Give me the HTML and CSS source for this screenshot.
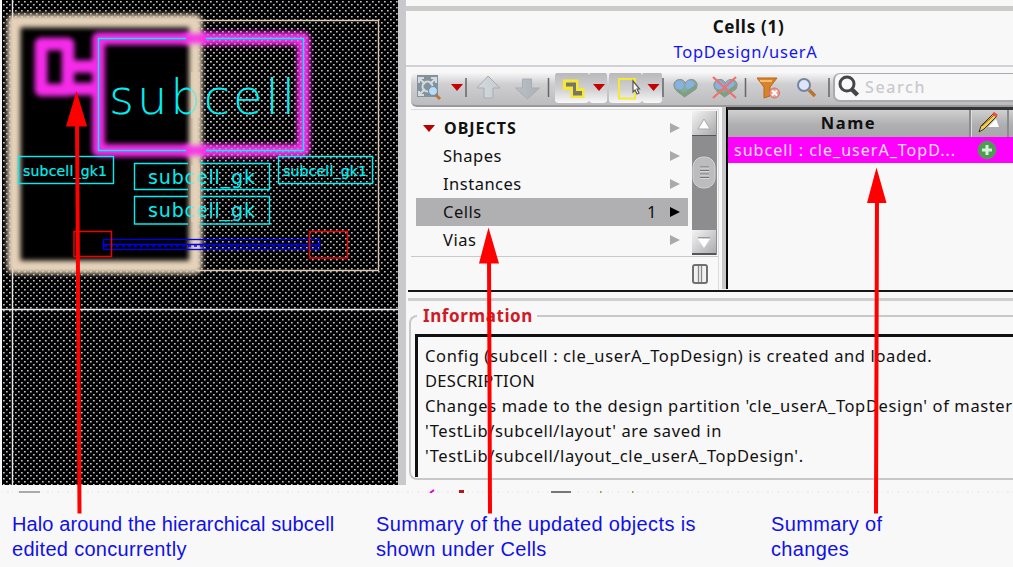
FILE: index.html
```html
<!DOCTYPE html>
<html lang="en">
<head>
<meta charset="utf-8">
<title>Cells (1) - TopDesign/userA</title>
<link rel="stylesheet" href="styles.css">
</head>
<body>
<div class="page">
  <main class="workspace">
    <section class="canvas">
      <svg class="layout" width="396" height="485" viewBox="2 0 396 485">
        <defs>
          <pattern id="dots" width="6" height="6" patternUnits="userSpaceOnUse">
            <rect x="0" y="1" width="1.7" height="1.5" fill="#c0c0c6"/>
            <rect x="3" y="4" width="1.7" height="1.5" fill="#c0c0c6"/>
          </pattern>
          <filter id="soft" x="-20%" y="-20%" width="140%" height="140%"><feGaussianBlur stdDeviation="2.4"/></filter>
        </defs>
        <rect x="2" width="396" height="485" fill="#000"/>
        <rect x="2" width="396" height="485" fill="url(#dots)"/>
        <path class="axis" d="M12.5 0V485M2 309.5H398"/>
        <path class="extent" d="M196 20.5H378.500V270.500H196"/>
        <rect x="12" y="20" width="185" height="248" fill="#000"/>
        <g class="magenta-halo" filter="url(#soft)">
          <rect x="41" y="44" width="27" height="46"/>
          <path d="M68 66.500H98M68 89H98"/>
          <rect x="98.500" y="38.500" width="205" height="112"/>
        </g>
        <rect x="202" y="28" width="110" height="132" fill="url(#dots)" opacity=".55"/>
        <rect class="tan-halo" x="14" y="21" width="181.500" height="246" filter="url(#soft)"/>
        <g class="magenta-cross" filter="url(#soft)"><path d="M184 38.500H208M184 150.500H208"/></g>
        <g class="cyan">
          <path d="M186 38.500H98.500V150.500H186M206 38.500H303.500V150.500H206"/>
          <rect x="18.500" y="156.500" width="95" height="27"/>
          <rect x="278.500" y="156.500" width="94" height="27"/>
          <path d="M188 163.500H134.500V189.500H188M200 163.500H269.500V189.500H200M188 196.500H134.500V224H188M200 196.500H269.500V224H200"/>
        </g>
        <text class="cell-name" x="109" y="114" textLength="186">subcell</text>
        <text class="gk1" x="23" y="176" textLength="84">subcell_gk1</text>
        <text class="gk1" x="283" y="176" textLength="84">subcell_gk1</text>
        <text class="gk" x="148" y="184" textLength="107">subcell_gk</text>
        <text class="gk" x="148" y="217" textLength="107">subcell_gk</text>
        <path class="veil" d="M195.500 72V118M195.500 165V222"/>
        <g class="blue">
          <rect x="103.500" y="239.500" width="216" height="10"/>
          <path d="M104 244.500H319"/>
          <path d="M104 246H319" stroke-dasharray="3 3"/>
        </g>
        <rect class="pin" x="74" y="231.500" width="37.500" height="25"/>
        <rect class="pin" x="309.500" y="231.500" width="38" height="26.500"/>
      </svg>
    </section>
    <section class="assistant">
      <header class="heading">
        <h1>Cells (1)</h1>
        <p>TopDesign/userA</p>
      </header>
      <div class="toolbar">
        <svg class="tools" width="425" height="34" viewBox="411 73 425 34">
          <defs>
            <linearGradient id="tab" x2="0" y2="1"><stop offset="0" stop-color="#b8b8bb"/><stop offset=".55" stop-color="#d0d0d2"/><stop offset="1" stop-color="#f8f8f8"/></linearGradient>
            <linearGradient id="arrow" x2="1"><stop stop-color="#d6dbdf"/><stop offset="1" stop-color="#a9b1b7"/></linearGradient>
          </defs>
          <path d="M555 100V76q0-4 5-4h25q3 0 4 3 1-3 4-3h10q4 0 4 4v24q0 3-4 3h-10q-3 0-4-2-1 2-4 2h-26q-4 0-4-3zM609 100V76q0-4 4-4h24q4 0 5 3 1-3 4-3h12q4 0 4 4v24q0 3-4 3h-12q-3 0-4-2-1 2-4 2h-25q-4 0-4-3z" fill="url(#tab)"/>
          <rect x="417" y="75" width="21" height="22" fill="#84929c"/>
          <g stroke="#d3dce0" stroke-width="2" fill="none"><path d="M419 83v-5h5M431 78h5v5M419 91v4h5M419 78l6 6M436 78l-6 6M419 95l6-6"/><circle cx="427.500" cy="86.500" r="5"/></g>
          <path d="M435 94l5 5" stroke="#bd7437" stroke-width="3"/><circle cx="433" cy="91" r="4.500" fill="#b9dcf6" stroke="#6c8aa8"/>
          <g fill="#c40000"><path d="M451 84h12l-6 7zM593 84h12l-6 7zM647.500 84h12l-6 7z"/></g>
          <g stroke="#66666a" stroke-width="1.500"><path d="M466 78V97M548.500 78V97M663 78V97M745.500 78V97M829 78V97"/></g>
          <g fill="url(#arrow)" stroke="#a6adb3"><path d="M488 76l12 12h-7v10h-9v-10h-7zM527.500 99l-12-11h7v-9h9v9h8z"/></g>
          <path d="M565.500 82h10.500v8.500h6v5h-9v-8h-7.500z" fill="#75735d" stroke="#f6e833" stroke-width="5"/><path d="M566 82.500h10v8.500h6v4.500h-9v-9h-7z" fill="#77766a"/>
          <rect x="619" y="79" width="16" height="19.500" fill="none" stroke="#f5ea30" stroke-width="2"/>
          <path d="M633 81v11l2-2 2 4 2-1-2-4h2.500z" fill="#fff" stroke="#55555a" stroke-width="1.200"/>
          <g id="hearts"><path d="M684.500 97l-9.500-8q-3-6 2-9 6-2 8 3 4-5 9-3 5 3 2 9z" fill="#85a99a" stroke="#8a9093"/><circle cx="679.500" cy="85" r="4.500" fill="#86b2e4"/><circle cx="690" cy="85" r="4.500" fill="#86b2e4"/><path d="M677 90l7 5 12-9" stroke="#7da17f" stroke-width="3" fill="none"/></g>
          <use href="#hearts" x="40"/>
          <path d="M713 77l23 21M736 77l-23 21" stroke="#f07070" stroke-width="2.300"/>
          <path d="M757 78h20l-7 9v9l-6 2v-11z" fill="#d98227" stroke="#b66720"/><path d="M760 81h12" stroke="#f6bd70" stroke-width="2"/><circle cx="774.500" cy="93" r="5" fill="#ed9b90" stroke="#cb746c"/><path d="M772 90.500l5 5m0-5l-5 5" stroke="#fff" stroke-width="2"/>
          <path d="M809 90l6 6" stroke="#b87333" stroke-width="3.500"/><circle cx="804" cy="85" r="6" fill="#dce6fa" stroke="#77849e" stroke-width="2"/>
        </svg>
        <div class="search">
          <svg width="24" height="24" viewBox="0 0 24 24"><circle cx="10" cy="9" r="7" fill="none" stroke="#45454a" stroke-width="3"/><path d="M14.500 14l6 6" stroke="#45454a" stroke-width="4.500"/></svg>
          <span>Search</span>
        </div>
      </div>
      <div class="browser">
        <div class="tree-pane">
          <div class="tree-body">
            <ul class="tree">
              <li class="root"><i class="open"></i><span>OBJECTS</span><b class="next"></b></li>
              <li><span>Shapes</span><b class="next"></b></li>
              <li><span>Instances</span><b class="next"></b></li>
              <li class="selected"><span>Cells</span><em>1</em><b class="next"></b></li>
              <li><span>Vias</span><b class="next"></b></li>
            </ul>
            <svg class="scrollbar" width="25" height="144" viewBox="0 0 25 144">
              <defs><linearGradient id="btn" x2="1" y2="1"><stop stop-color="#f4f4f4"/><stop offset="1" stop-color="#aaaaad"/></linearGradient></defs>
              <rect width="25" height="144" fill="#8d8d90"/>
              <rect width="24" height="24" fill="url(#btn)"/><path d="M0 24.500H24" stroke="#555"/><path d="M6 18l6-10 6 10z" fill="#fff" stroke="#aaa"/>
              <rect x="1" y="46" width="22" height="31" rx="10" fill="#bcbcbe" stroke="#d2d2d4"/><path d="M8 56h9M8 59.500h9M8 63h9M8 66.500h9" stroke="#737376"/><path d="M8 57h9M8 60.500h9M8 64h9M8 67.500h9" stroke="#eee" stroke-width=".6"/>
              <rect y="119" width="24" height="24" fill="url(#btn)"/><path d="M0 143H24" stroke="#555" stroke-width="2"/><path d="M6 128h12l-6 9z" fill="#fff"/><path d="M6 126.500h12" stroke="#999"/>
            </svg>
          </div>
          <div class="tree-foot"><svg width="18" height="22" viewBox="0 0 18 22"><rect x="2" y="2" width="14" height="18" rx="2" fill="#f2f2f2" stroke="#717174" stroke-width="2"/><path d="M7.500 3V19M10.500 3V19" stroke="#88888b" stroke-width="1.300"/></svg></div>
        </div>
        <div class="table">
          <div class="thead"><strong>Name</strong><span class="edit"><svg width="30" height="24" viewBox="0 0 30 24"><path d="M13 15l8-8 3 8z" fill="#fff"/><path d="M4 20l2-6L18 2l4 2L9 17z" fill="#efd047" stroke="#34312f"/><path d="M7 14L19 3" stroke="#a04c25" stroke-width="1"/><path d="M18 1l4 3" stroke="#e55342" stroke-width="3"/></svg></span><span class="rest"></span></div>
          <div class="row"><span>subcell : cle_userA_TopD...</span><svg width="20" height="20" viewBox="0 0 20 20"><circle cx="10" cy="10" r="9" fill="#4a9e50" stroke="#718772"/><path d="M10 5v10M5 10h10" stroke="#dcefdc" stroke-width="3"/></svg></div>
        </div>
      </div>
      <div class="splitter"></div>
      <div class="information">
        <h2>Information</h2>
        <div class="message">
          <p>Config (subcell : cle_userA_TopDesign) is created and loaded.</p>
          <p class="caps">DESCRIPTION</p>
          <p>Changes made to the design partition 'cle_userA_TopDesign' of master</p>
          <p>'TestLib/subcell/layout' are saved in</p>
          <p>'TestLib/subcell/layout_cle_userA_TopDesign'.</p>
        </div>
      </div>
    </section>
  </main>
  <svg class="cutoff" width="1013" height="8" viewBox="0 485 1013 8"><path d="M2 492H1013" stroke="#e4e4e6" stroke-dasharray="1 4 2 3"/><path d="M19 492H40" stroke="#aaa" stroke-width="2"/><path d="M551 492H571" stroke="#777" stroke-width="2"/><path d="M430 493l4-3" stroke="#e000e0" stroke-width="2"/><path d="M459 491.500h5" stroke="#b51818" stroke-width="3"/><path d="M600 492h1.500M632 492h1.500" stroke="#b4942c" stroke-width="2"/></svg>
  <footer class="captions">
    <p class="c1">Halo around the hierarchical subcell<br><span>edited concurrently</span></p>
    <p class="c2">Summary of the updated objects is<br>shown under Cells</p>
    <p class="c3">Summary of<br>changes</p>
  </footer>
  <svg class="callouts" width="1013" height="567" viewBox="0 0 1013 567">
    <path d="M77 120L79.500 513.500M489 255L490 513.500M877 195L876 513.500"/>
    <path class="head" d="M76.500 91l10.500 35.500H66zM488.500 227.500l10.500 36H479zM876.500 167.500l10 35.500H867z"/>
  </svg>
</div>
</body>
</html>
```
FILE: styles.css
```css
* { box-sizing: border-box; }
body { margin: 0; background: #f8f8f8; font-family: "Noto Sans", "Open Sans", sans-serif; color: #111; overflow: hidden; }
h1, h2, p, ul { margin: 0; padding: 0; }
svg { display: block; flex: none; }
.page { width: 1013px; height: 567px; position: relative; overflow: hidden; }
.workspace { display: grid; grid-template-columns: 406px 607px; height: 485px; }
.canvas { padding-left: 2px; border-right: 8px solid #c9c9cd; }
.axis { stroke: #e6e6e6; fill: none; stroke-width: 1.4; }
.extent { stroke: #dcc8ae; fill: none; stroke-width: 1.4; }
.magenta-halo { fill: none; stroke: #f62bea; stroke-width: 12.5; stroke-linejoin: round; }
.magenta-cross { fill: none; stroke: #f62bea; stroke-width: 10; opacity: .9; }
.tan-halo { fill: none; stroke: #e4d2b9; stroke-width: 13; stroke-linejoin: round; }
.cyan { fill: none; stroke: #00eff2; stroke-width: 1.4; }
.layout text { fill: #00eff2; font-family: "DejaVu Sans", sans-serif; font-weight: 400; }
.layout .cell-name { font-size: 48px; font-family: "DejaVu Sans Light", "DejaVu Sans", sans-serif; font-weight: 200; }
.gk1 { font-size: 14px; stroke: #00eff2; stroke-width: .2; }
.gk { font-size: 19px; }
.veil { stroke: #e4d2b9; stroke-width: 9; opacity: .65; fill: none; }
.blue { fill: none; stroke: #0000ee; stroke-width: 1.3; }
.pin { fill: none; stroke: #f00000; stroke-width: 1.5; }

.assistant { display: flex; flex-direction: column; min-width: 0; background: #f8f8f8; overflow: hidden; }
.heading { height: 61px; margin-top: 6px; border-top: 5px solid #cbcbc9; border-bottom: 2px solid #d0d0d5; text-align: center; padding: 4px 0 0 78px; }
.heading h1 { font-size: 17px; line-height: 24px; letter-spacing: .7px; }
.heading p { font-size: 16.500px; line-height: 25px; color: #1515f0; letter-spacing: .75px; padding-right: 6px; }
.toolbar { height: 34px; margin: 6px 0 0 5px; display: flex; border-radius: 6px 0 0 6px; border-bottom: 2px solid #99999b; background: linear-gradient(#f5f5f5, #cfcfd2 35%, #bcbcbf); }
.search { flex: 1; margin: 0 0 3px -3px; display: flex; align-items: center; gap: 4px; padding-left: 2px; background: #f8f8f8; border: 2px solid #aaaaac; border-width: 1px 0 2px 2px; border-radius: 7px 0 0 7px; color: #c9c9ce; font-size: 16px; letter-spacing: 1.600px; font-weight: 500; }
.browser { height: 185px; margin-left: 2px; padding-left: 3px; display: grid; grid-template-columns: 310px 1fr; border-bottom: 2px solid #161616; }
.tree-pane { border-top: 1px solid #ddd; margin-top: 2px; margin-right: 2px; border-right: 1px solid #ddd; display: flex; flex-direction: column; }
.tree-body { display: flex; height: 147px; border-bottom: 1px solid #c9c9c9; padding-top: 1px; }
.tree { list-style: none; width: 277px; padding: 3px 0 0 5px; }
.tree li { height: 28px; line-height: 28px; font-size: 16.500px; padding: 0 8px 0 27px; display: flex; align-items: center; letter-spacing: .5px; }
.tree li span { flex: 1; }
.tree .root { font-weight: 700; padding-left: 7px; gap: 9px; }
.tree .root span { font-size: 16px; letter-spacing: 1px; }
.tree .selected { background: #b0b0b2; }
.tree em { font-style: normal; margin-right: 13px; }
.open { border: 6px solid transparent; border-top: 7px solid #b90000; border-bottom: 0; }
.next { border: 5px solid transparent; border-left: 10px solid #aaa; border-right: 0; }
.selected .next { border-left-color: #000; }
.scrollbar { margin-left: 4px; }
.tree-foot { flex: 1; display: flex; align-items: center; justify-content: flex-end; padding-right: 9px; }
.table { border-left: 2px solid #080808; border-top: 3px solid #333; margin-left: 5px; box-shadow: -4px 0 #c9c9cb; margin-bottom: 1px; }
.thead { height: 27px; display: flex; background: linear-gradient(#d0d0d0, #afafb2 55%, #a8a8ab); font-size: 16.500px; line-height: 26px; text-align: center; letter-spacing: 1.6px; }
.thead strong { width: 241px; }
.edit { width: 38px; border-left: 2px solid #8c8c8f; padding: 2px 0 0 4px; box-shadow: inset 1px 0 #ddd; }
.rest { flex: 1; border-left: 2px solid #8c8c8f; }
.row { display: flex; align-items: center; height: 26px; line-height: 24px; background: #f0f; color: #ffe2ff; font-size: 16px; padding: 0 0 0 6px; }
.row span { width: 243px; white-space: nowrap; letter-spacing: 1.02px; }
.splitter { height: 9px; border-bottom: 3px solid #cfcfd2; margin-left: 2px; }
.information { border: 2px solid #c8c8ca; border-right: 0; border-radius: 8px 0 0 8px; height: 165px; margin: 14px 0 0 3px; padding-left: 4px; }
.information h2 { color: #d01a25; font-size: 17px; line-height: 24px; height: 18px; width: 120px; margin-top: -13px; margin-left: 2px; padding-left: 6px; background: #f8f8f8; letter-spacing: .6px; }
.message { margin-top: 12px; height: 143px; border-left: 3px solid #111; border-top: 3px solid #111; padding: 6px 0 0 7px; white-space: nowrap; font-size: 16.500px; line-height: 25px; letter-spacing: .62px; }
.caps { letter-spacing: .3px; }
.captions { display: grid; grid-template-columns: 364px 395px 1fr; padding: 19px 0 0 12px; font: 20px/25px "Liberation Sans", Arial, sans-serif; color: #1010e8; }
.c1 { letter-spacing: .12px; }
.c1 span { letter-spacing: .3px; }
.c2, .c3 { letter-spacing: .36px; }
.callouts { position: absolute; inset: 0; fill: none; stroke: #f00; stroke-width: 4; }
.head { fill: #f00; stroke: none; }
```
